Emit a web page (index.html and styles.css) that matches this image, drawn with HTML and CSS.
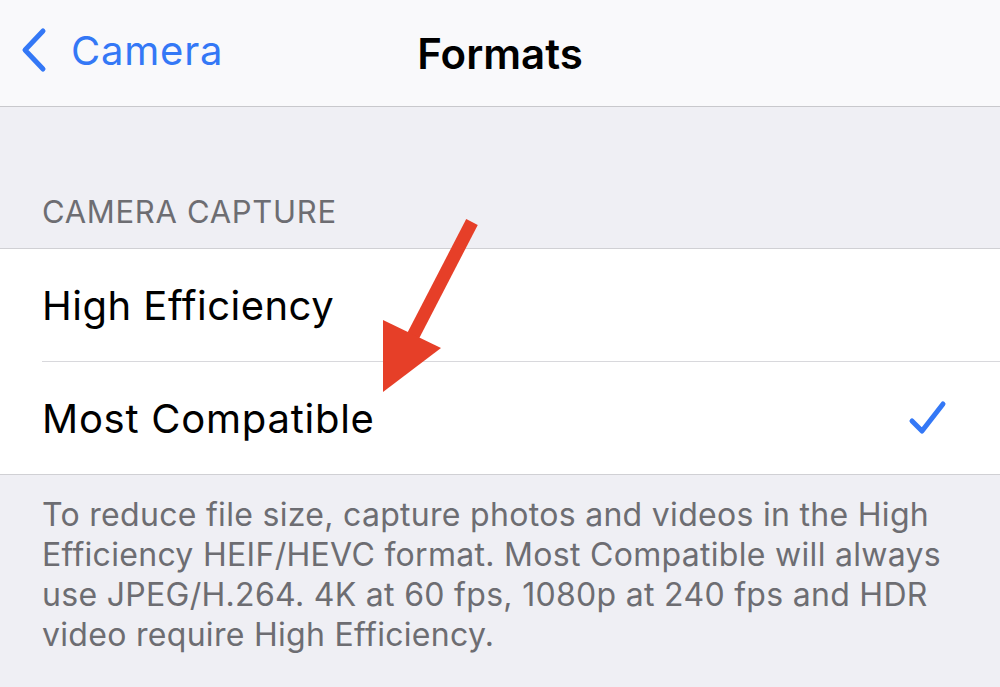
FILE: index.html
```html
<!DOCTYPE html>
<html lang="en">
<head>
    <meta charset="UTF-8">
    <title>Formats</title>
    <link rel="stylesheet" href="styles.css">
</head>
<body>
    <div class="navbar">
        <a class="back" href="#">
            <svg class="chevron" width="26" height="46" viewBox="0 0 26 46">
                <path d="M22 4 L4 23 L22 42" fill="none" stroke="#3478f6" stroke-width="5" stroke-linecap="round" stroke-linejoin="round"/>
            </svg>
            <span>Camera</span>
        </a>
        <div class="title">Formats</div>
    </div>

    <div class="section-header">CAMERA CAPTURE</div>

    <div class="group">
        <div class="row">
            <span class="label">High Efficiency</span>
        </div>
        <div class="row">
            <span class="label label-wide">Most Compatible</span>
            <svg class="check" width="40" height="40" viewBox="0 0 40 40">
                <path d="M4 23 L14 33 L35 6" fill="none" stroke="#3478f6" stroke-width="5" stroke-linecap="round" stroke-linejoin="round"/>
            </svg>
        </div>
    </div>

    <div class="footer">
        To reduce file size, capture photos and videos in the High Efficiency HEIF/HEVC format. Most Compatible will always use JPEG/H.264. 4K at 60 fps, 1080p at 240 fps and HDR video require High Efficiency.
    </div>

    <!-- flecha roja encima de la lista -->
    <svg class="arrow" width="1000" height="687" viewBox="0 0 1000 687">
        <line x1="472" y1="222" x2="412" y2="338" stroke="#e63f28" stroke-width="13"/>
        <polygon points="383,320 441,348 383,392" fill="#e63f28"/>
    </svg>
</body>
</html>
```

FILE: styles.css
```css
body {
    margin: 0;
    width: 1000px;
    height: 687px;
    overflow: hidden;
    background-color: #efeff4;
    font-family: Inter, "Noto Sans", sans-serif;
    position: relative;
}

.navbar {
    height: 100px;
    padding-bottom: 6px;
    background-color: #f9f9fb;
    border-bottom: 1px solid #c8c8cc;
    display: flex;
    align-items: center;
    position: relative;
}

.back {
    display: flex;
    align-items: center;
    gap: 24px;
    padding-left: 21px;
    color: #3478f6;
    text-decoration: none;
    font-size: 40px;
    letter-spacing: 0.8px;
}

.title {
    position: absolute;
    left: 0;
    right: 0;
    top: 28px;
    text-align: center;
    font-size: 42px;
    font-weight: 600;
    color: #000;
    pointer-events: none;
}

.section-header {
    padding: 86px 42px 0;
    height: 55px;
    font-size: 31px;
    color: #6d6d72;
    letter-spacing: 0.7px;
}

.group {
    background-color: #fff;
    border-top: 1px solid #d0d0d4;
    border-bottom: 1px solid #d0d0d4;
}

.row {
    height: 112px;
    margin-left: 42px;
    padding-right: 52px;
    display: flex;
    align-items: center;
    justify-content: space-between;
}

.row + .row {
    border-top: 1px solid #d8d8dc;
}

.label {
    font-size: 40px;
    color: #000;
    letter-spacing: 0.5px;
}

.label-wide {
    letter-spacing: 0.75px;
}

.footer {
    padding: 20px 42px 0;
    font-size: 32px;
    line-height: 40px;
    letter-spacing: 0.3px;
    color: #6d6d72;
}

.arrow {
    position: absolute;
    left: 0;
    top: 0;
    pointer-events: none;
}
```
